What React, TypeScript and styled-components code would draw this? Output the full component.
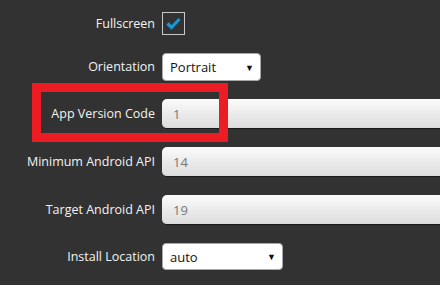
import React from "react";
import styled, { createGlobalStyle } from "styled-components";

const Global = createGlobalStyle`
  html, body { margin: 0; padding: 0; background: #323232; }
  body { overflow: hidden; font-family: "Open Sans", "Noto Sans", sans-serif; }
`;

const Page = styled.div`
  position: relative;
  width: 440px;
  height: 285px;
  overflow: hidden;
  background: #323232;
`;

const Form = styled.div`
  display: flex;
  flex-direction: column;
  gap: 18px;
  padding-top: 12px;
`;

const Row = styled.div`
  display: grid;
  grid-template-columns: 155px 1fr;
  column-gap: 7px;
  align-items: center;
`;

const Label = styled.label`
  text-align: right;
  color: #f2f2f2;
  font-size: 12.5px;
  line-height: 16px;
  white-space: nowrap;
`;

const Check = styled.div`
  width: 21px;
  height: 21px;
  border: 1px solid #c8c8c8;
  display: flex;
  align-items: center;
  justify-content: center;
`;

const Select = styled.div<{ $w: number; $h: number }>`
  width: ${(p) => p.$w}px;
  height: ${(p) => p.$h}px;
  box-sizing: border-box;
  background: #fff;
  border: 1px solid #a9a9a9;
  border-radius: 4px;
  display: flex;
  align-items: center;
  justify-content: space-between;
  padding: 0 6px 0 7px;
  color: #111;
  font-size: 13px;
`;

const Arrow = styled.span`
  font-size: 9px;
  color: #111;
`;

const Input = styled.div`
  width: 320px;
  height: 30px;
  box-sizing: border-box;
  border-radius: 5px;
  background: linear-gradient(#fbfbfb, #dcdcdc);
  border-bottom: 1px solid #1a1a1a;
  display: flex;
  align-items: center;
  padding-left: 11px;
  color: #777;
  font-size: 13px;
`;

const Highlight = styled.div`
  position: absolute;
  left: 32px;
  top: 83px;
  width: 196px;
  height: 59px;
  box-sizing: border-box;
  border: 9px solid #ec1c24;
  pointer-events: none;
`;

export default function App() {
  return (
    <Page>
      <Global />
      <Form>
        <Row>
          <Label>Fullscreen</Label>
          <Check>
            <svg width="17" height="14" viewBox="0 0 17 14">
              <path d="M2.5 6.5 L6.5 10.5 L14.5 2" fill="none" stroke="#1b97d4" strokeWidth="3.2" strokeLinejoin="miter" />
            </svg>
          </Check>
        </Row>
        <Row>
          <Label>Orientation</Label>
          <Select $w={99} $h={28}>
            <span>Portrait</span>
            <Arrow>▼</Arrow>
          </Select>
        </Row>
        <Row>
          <Label>App Version Code</Label>
          <Input>1</Input>
        </Row>
        <Row>
          <Label>Minimum Android API</Label>
          <Input>14</Input>
        </Row>
        <Row>
          <Label>Target Android API</Label>
          <Input>19</Input>
        </Row>
        <Row>
          <Label>Install Location</Label>
          <Select $w={121} $h={27}>
            <span>auto</span>
            <Arrow>▼</Arrow>
          </Select>
        </Row>
      </Form>
      <Highlight />
    </Page>
  );
}
